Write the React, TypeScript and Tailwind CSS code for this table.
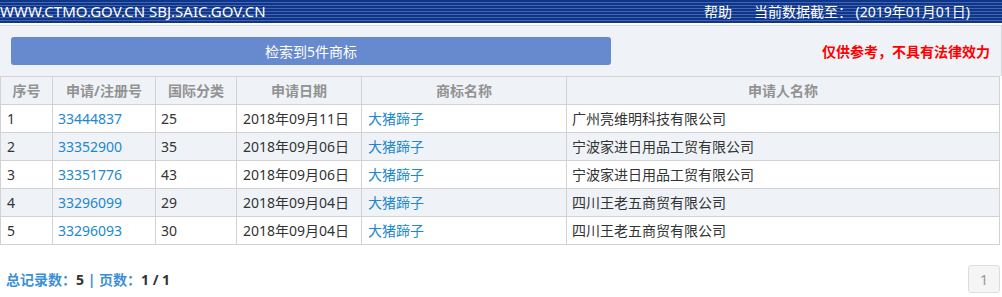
const rows = [
  { no: '1', reg: '33444837', cls: '25', date: '2018年09月11日', name: '大猪蹄子', applicant: '广州亮维明科技有限公司' },
  { no: '2', reg: '33352900', cls: '35', date: '2018年09月06日', name: '大猪蹄子', applicant: '宁波家进日用品工贸有限公司' },
  { no: '3', reg: '33351776', cls: '43', date: '2018年09月06日', name: '大猪蹄子', applicant: '宁波家进日用品工贸有限公司' },
  { no: '4', reg: '33296099', cls: '29', date: '2018年09月04日', name: '大猪蹄子', applicant: '四川王老五商贸有限公司' },
  { no: '5', reg: '33296093', cls: '30', date: '2018年09月04日', name: '大猪蹄子', applicant: '四川王老五商贸有限公司' },
]

export default function App() {
  return (
    <div className="w-[1002px] h-[297px] bg-white text-[14px] text-[#333] font-['Noto_Sans','Noto_Sans_CJK_SC',sans-serif] overflow-hidden">
      {/* Header */}
      <div className="h-[23px] flex items-center justify-between pl-0 pr-[32px] text-white bg-[repeating-linear-gradient(to_bottom,#0d3589_0px,#0d3589_2px,#4465ad_2px,#4465ad_3px)]">
        <div className="leading-none text-[15px]">WWW.CTMO.GOV.CN SBJ.SAIC.GOV.CN</div>
        <div className="flex gap-[22px] leading-none text-[14px]">
          <span>帮助</span>
          <span>当前数据截至： (2019年01月01日)</span>
        </div>
      </div>

      {/* Search result bar */}
      <div className="mt-[2px] h-[51px] bg-[#eff3f7] border-t border-r border-[#d6d9dd] flex items-center justify-between pl-[11px] pr-[11px]">
        <div className="w-[600px] h-[28px] rounded-[3px] bg-[#678ace] text-white text-[14px] flex items-center justify-center">
          检索到5件商标
        </div>
        <div className="text-[#ff0000] font-bold text-[14px]">仅供参考，不具有法律效力</div>
      </div>

      {/* Table */}
      <table className="w-[1000px] border-collapse table-fixed">
        <colgroup>
          <col className="w-[52px]" />
          <col className="w-[103px]" />
          <col className="w-[81px]" />
          <col className="w-[125px]" />
          <col className="w-[205px]" />
          <col />
        </colgroup>
        <thead>
          <tr className="h-[28px] bg-[#eff3f7] text-[#929292]">
            <th className="border border-[#d2d2d2] font-bold">序号</th>
            <th className="border border-[#d2d2d2] font-bold">申请/注册号</th>
            <th className="border border-[#d2d2d2] font-bold">国际分类</th>
            <th className="border border-[#d2d2d2] font-bold">申请日期</th>
            <th className="border border-[#d2d2d2] font-bold">商标名称</th>
            <th className="border border-[#d2d2d2] font-bold">申请人名称</th>
          </tr>
        </thead>
        <tbody>
          {rows.map((r, i) => (
            <tr key={r.no} className={`h-[28px] ${i % 2 === 1 ? 'bg-[#eff3f7]' : 'bg-white'}`}>
              <td className="border border-[#d2d2d2] pl-[6px]">{r.no}</td>
              <td className="border border-[#d2d2d2] pl-[5px] text-[#1d87cf]">{r.reg}</td>
              <td className="border border-[#d2d2d2] pl-[5px]">{r.cls}</td>
              <td className="border border-[#d2d2d2] pl-[6px]">{r.date}</td>
              <td className="border border-[#d2d2d2] pl-[6px] text-[#1d87cf]">{r.name}</td>
              <td className="border border-[#d2d2d2] pl-[5px]">{r.applicant}</td>
            </tr>
          ))}
        </tbody>
      </table>

      {/* Footer */}
      <div className="mt-[20px] flex items-center justify-between pl-[6px] pr-[2px]">
        <div className="font-bold text-[#3c8fd6] text-[14px]">
          总记录数：<span className="text-[#333]">5</span> | 页数：<span className="text-[#333]">1 / 1</span>
        </div>
        <div className="w-[32px] h-[28px] flex items-center justify-center rounded-[3px] border border-[#dddddd] bg-[#f5f5f5] text-[#999] text-[15px]">
          1
        </div>
      </div>
    </div>
  )
}
